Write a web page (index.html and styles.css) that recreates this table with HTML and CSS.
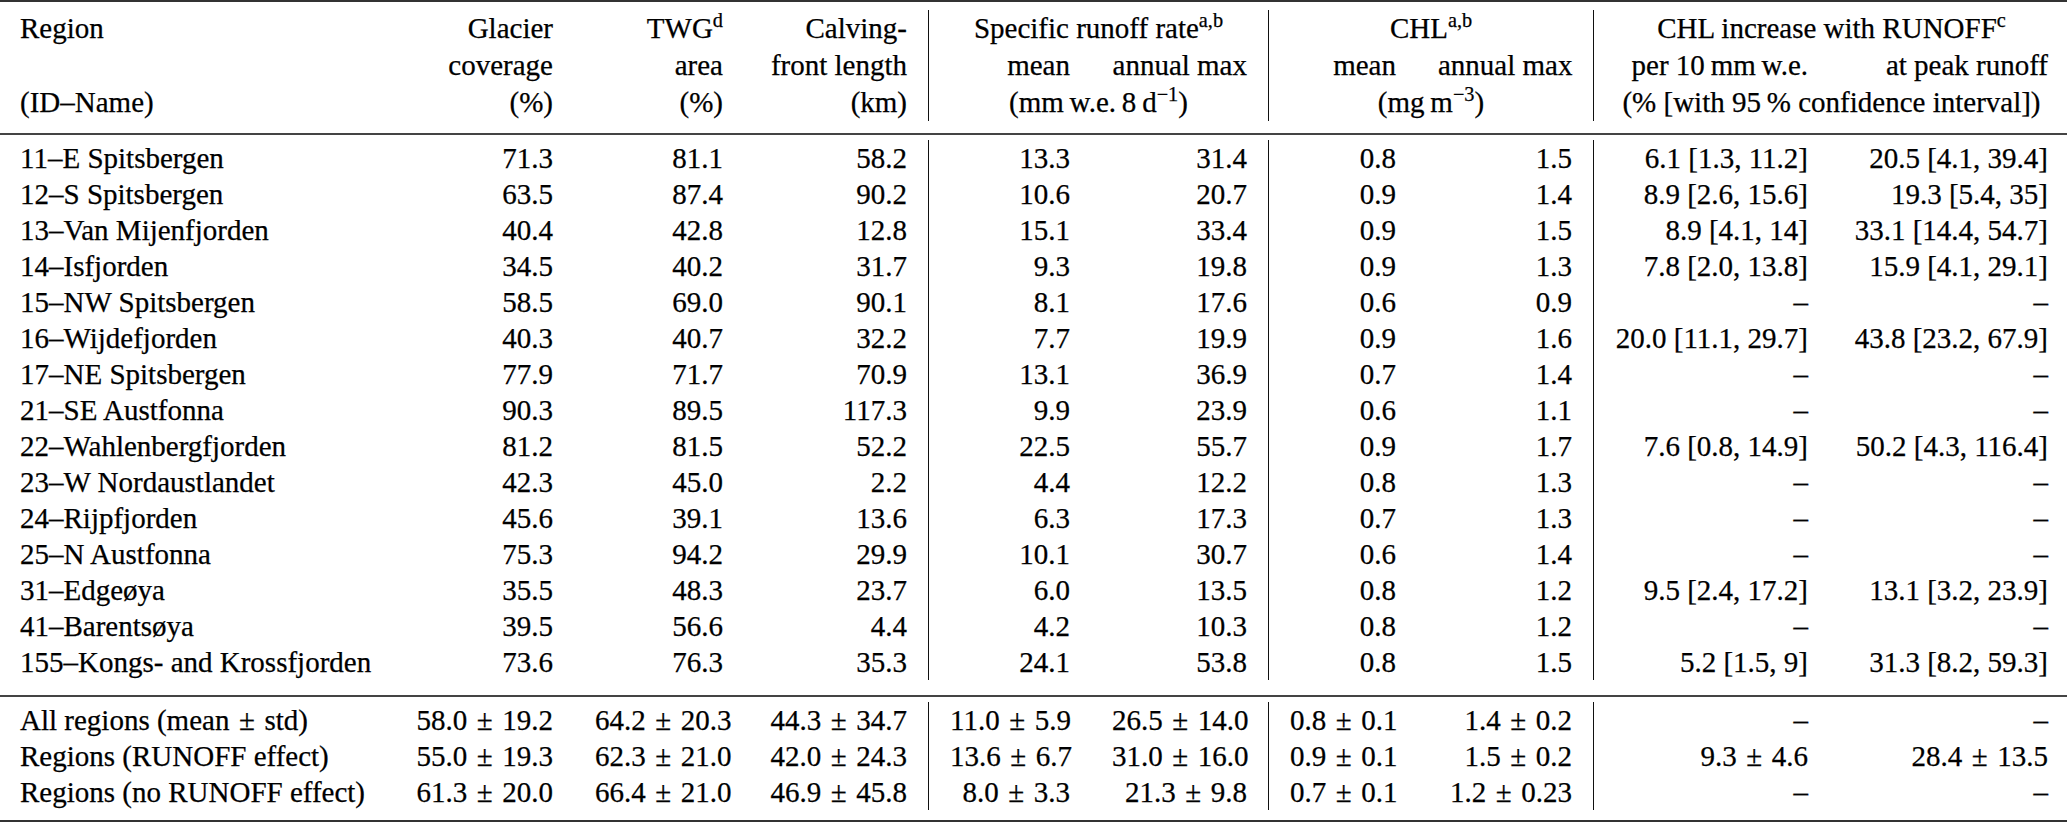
FILE: index.html
```html
<!DOCTYPE html>
<html lang="en">
<head>
<meta charset="utf-8">
<title>Glacier regions table</title>
<link rel="stylesheet" href="styles.css">
</head>
<body>
<div class="table" role="table">
  <div class="sec head" role="rowgroup">
    <div class="row" role="row">
      <div class="c">Region</div>
      <div class="c">Glacier</div>
      <div class="c">TWG<sup>d</sup></div>
      <div class="c">Calving-</div>
      <div class="c span2 vl">Specific runoff rate<sup>a,b</sup></div>
      <div class="c span2 vl">CHL<sup>a,b</sup></div>
      <div class="c span2 vl">CHL increase with RUNOFF<sup>c</sup></div>
    </div>
    <div class="row" role="row">
      <div class="c"></div>
      <div class="c">coverage</div>
      <div class="c">area</div>
      <div class="c">front length</div>
      <div class="c vl">mean</div>
      <div class="c">annual max</div>
      <div class="c vl">mean</div>
      <div class="c">annual max</div>
      <div class="c vl">per 10&thinsp;mm&thinsp;w.e.</div>
      <div class="c">at peak runoff</div>
    </div>
    <div class="row" role="row">
      <div class="c">(ID–Name)</div>
      <div class="c">(%)</div>
      <div class="c">(%)</div>
      <div class="c">(km)</div>
      <div class="c span2 vl">(mm&thinsp;w.e.&thinsp;8&thinsp;d<sup>−1</sup>)</div>
      <div class="c span2 vl">(mg&thinsp;m<sup>−3</sup>)</div>
      <div class="c span2 vl">(% [with 95&thinsp;% confidence interval])</div>
    </div>
  </div>

  <div class="sec data" role="rowgroup">
    <div class="row" role="row"><div class="c">11–E Spitsbergen</div><div class="c">71.3</div><div class="c">81.1</div><div class="c">58.2</div><div class="c">13.3</div><div class="c">31.4</div><div class="c">0.8</div><div class="c">1.5</div><div class="c">6.1 [1.3, 11.2]</div><div class="c">20.5 [4.1, 39.4]</div></div>
    <div class="row" role="row"><div class="c">12–S Spitsbergen</div><div class="c">63.5</div><div class="c">87.4</div><div class="c">90.2</div><div class="c">10.6</div><div class="c">20.7</div><div class="c">0.9</div><div class="c">1.4</div><div class="c">8.9 [2.6, 15.6]</div><div class="c">19.3 [5.4, 35]</div></div>
    <div class="row" role="row"><div class="c">13–Van Mijenfjorden</div><div class="c">40.4</div><div class="c">42.8</div><div class="c">12.8</div><div class="c">15.1</div><div class="c">33.4</div><div class="c">0.9</div><div class="c">1.5</div><div class="c">8.9 [4.1, 14]</div><div class="c">33.1 [14.4, 54.7]</div></div>
    <div class="row" role="row"><div class="c">14–Isfjorden</div><div class="c">34.5</div><div class="c">40.2</div><div class="c">31.7</div><div class="c">9.3</div><div class="c">19.8</div><div class="c">0.9</div><div class="c">1.3</div><div class="c">7.8 [2.0, 13.8]</div><div class="c">15.9 [4.1, 29.1]</div></div>
    <div class="row" role="row"><div class="c">15–NW Spitsbergen</div><div class="c">58.5</div><div class="c">69.0</div><div class="c">90.1</div><div class="c">8.1</div><div class="c">17.6</div><div class="c">0.6</div><div class="c">0.9</div><div class="c">–</div><div class="c">–</div></div>
    <div class="row" role="row"><div class="c">16–Wijdefjorden</div><div class="c">40.3</div><div class="c">40.7</div><div class="c">32.2</div><div class="c">7.7</div><div class="c">19.9</div><div class="c">0.9</div><div class="c">1.6</div><div class="c">20.0 [11.1, 29.7]</div><div class="c">43.8 [23.2, 67.9]</div></div>
    <div class="row" role="row"><div class="c">17–NE Spitsbergen</div><div class="c">77.9</div><div class="c">71.7</div><div class="c">70.9</div><div class="c">13.1</div><div class="c">36.9</div><div class="c">0.7</div><div class="c">1.4</div><div class="c">–</div><div class="c">–</div></div>
    <div class="row" role="row"><div class="c">21–SE Austfonna</div><div class="c">90.3</div><div class="c">89.5</div><div class="c">117.3</div><div class="c">9.9</div><div class="c">23.9</div><div class="c">0.6</div><div class="c">1.1</div><div class="c">–</div><div class="c">–</div></div>
    <div class="row" role="row"><div class="c">22–Wahlenbergfjorden</div><div class="c">81.2</div><div class="c">81.5</div><div class="c">52.2</div><div class="c">22.5</div><div class="c">55.7</div><div class="c">0.9</div><div class="c">1.7</div><div class="c">7.6 [0.8, 14.9]</div><div class="c">50.2 [4.3, 116.4]</div></div>
    <div class="row" role="row"><div class="c">23–W Nordaustlandet</div><div class="c">42.3</div><div class="c">45.0</div><div class="c">2.2</div><div class="c">4.4</div><div class="c">12.2</div><div class="c">0.8</div><div class="c">1.3</div><div class="c">–</div><div class="c">–</div></div>
    <div class="row" role="row"><div class="c">24–Rijpfjorden</div><div class="c">45.6</div><div class="c">39.1</div><div class="c">13.6</div><div class="c">6.3</div><div class="c">17.3</div><div class="c">0.7</div><div class="c">1.3</div><div class="c">–</div><div class="c">–</div></div>
    <div class="row" role="row"><div class="c">25–N Austfonna</div><div class="c">75.3</div><div class="c">94.2</div><div class="c">29.9</div><div class="c">10.1</div><div class="c">30.7</div><div class="c">0.6</div><div class="c">1.4</div><div class="c">–</div><div class="c">–</div></div>
    <div class="row" role="row"><div class="c">31–Edgeøya</div><div class="c">35.5</div><div class="c">48.3</div><div class="c">23.7</div><div class="c">6.0</div><div class="c">13.5</div><div class="c">0.8</div><div class="c">1.2</div><div class="c">9.5 [2.4, 17.2]</div><div class="c">13.1 [3.2, 23.9]</div></div>
    <div class="row" role="row"><div class="c">41–Barentsøya</div><div class="c">39.5</div><div class="c">56.6</div><div class="c">4.4</div><div class="c">4.2</div><div class="c">10.3</div><div class="c">0.8</div><div class="c">1.2</div><div class="c">–</div><div class="c">–</div></div>
    <div class="row" role="row"><div class="c">155–Kongs- and Krossfjorden</div><div class="c">73.6</div><div class="c">76.3</div><div class="c">35.3</div><div class="c">24.1</div><div class="c">53.8</div><div class="c">0.8</div><div class="c">1.5</div><div class="c">5.2 [1.5, 9]</div><div class="c">31.3 [8.2, 59.3]</div></div>
  </div>

  <div class="sec data summary" role="rowgroup">
    <div class="row" role="row"><div class="c">All regions (mean <span class="pm">±</span> std)</div><div class="c">58.0 <span class="pm">±</span> 19.2</div><div class="c">64.2 <span class="pm">±</span> 20.3</div><div class="c">44.3 <span class="pm">±</span> 34.7</div><div class="c">11.0 <span class="pm">±</span> 5.9</div><div class="c">26.5 <span class="pm">±</span> 14.0</div><div class="c">0.8 <span class="pm">±</span> 0.1</div><div class="c">1.4 <span class="pm">±</span> 0.2</div><div class="c">–</div><div class="c">–</div></div>
    <div class="row" role="row"><div class="c">Regions (RUNOFF effect)</div><div class="c">55.0 <span class="pm">±</span> 19.3</div><div class="c">62.3 <span class="pm">±</span> 21.0</div><div class="c">42.0 <span class="pm">±</span> 24.3</div><div class="c">13.6 <span class="pm">±</span> 6.7</div><div class="c">31.0 <span class="pm">±</span> 16.0</div><div class="c">0.9 <span class="pm">±</span> 0.1</div><div class="c">1.5 <span class="pm">±</span> 0.2</div><div class="c">9.3 <span class="pm">±</span> 4.6</div><div class="c">28.4 <span class="pm">±</span> 13.5</div></div>
    <div class="row" role="row"><div class="c">Regions (no RUNOFF effect)</div><div class="c">61.3 <span class="pm">±</span> 20.0</div><div class="c">66.4 <span class="pm">±</span> 21.0</div><div class="c">46.9 <span class="pm">±</span> 45.8</div><div class="c">8.0 <span class="pm">±</span> 3.3</div><div class="c">21.3 <span class="pm">±</span> 9.8</div><div class="c">0.7 <span class="pm">±</span> 0.1</div><div class="c">1.2 <span class="pm">±</span> 0.23</div><div class="c">–</div><div class="c">–</div></div>
  </div>
</div>
</body>
</html>
```

FILE: styles.css
```css
html, body {
  margin: 0;
  padding: 0;
  background: #fff;
}

body {
  font-family: "Liberation Serif", "Times New Roman", serif;
  font-size: 29px;
  color: #000;
  -webkit-text-stroke: 0.25px #000;
}

.table {
  width: 2067px;
  border-top: 2px solid #333;
}

.sec {
  display: flex;
  flex-direction: column;
}

.head {
  padding: 8px 0 12px;
  border-bottom: 2px solid #444;
}

.data {
  padding: 5px 0 15px;
  border-bottom: 2px solid #444;
}

.summary {
  padding: 5px 0 10px;
  border-bottom: 2px solid #333;
}

.row {
  display: grid;
  grid-template-columns: 390px 184px 170px 184px 163px 177px 149px 176px 236px 238px;
  line-height: 36px;
}

.head .row {
  line-height: 37px;
}

.c {
  box-sizing: border-box;
  padding: 0 21px;
  text-align: right;
  white-space: nowrap;
}

.c:first-child {
  padding-left: 20px;
  text-align: left;
}

.c:last-child {
  padding-right: 19px;
}

.span2 {
  grid-column: span 2;
  text-align: center;
}

.vl,
.data .row > .c:nth-child(5),
.data .row > .c:nth-child(7),
.data .row > .c:nth-child(9) {
  border-left: 1px solid #111;
}

sup {
  font-size: 0.7em;
  line-height: 0;
  vertical-align: 11px;
}

.pm {
  padding: 0 0.08em;
}
```
